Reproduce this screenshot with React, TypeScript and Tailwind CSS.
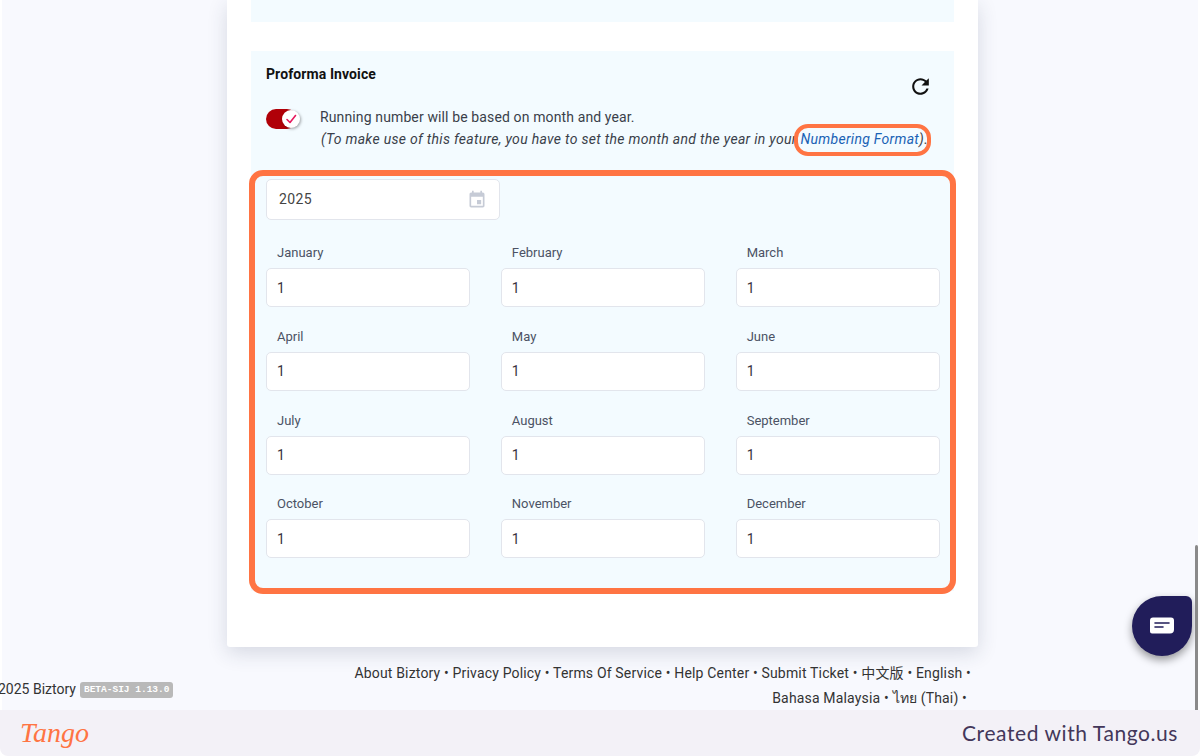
const months = [
  "January",
  "February",
  "March",
  "April",
  "May",
  "June",
  "July",
  "August",
  "September",
  "October",
  "November",
  "December",
];

function MonthField({ label }: { label: string }) {
  return (
    <div className="flex flex-col">
      <label className="mb-[5px] h-5 pl-[11px] text-[13px] leading-5 text-[#4b5264]">{label}</label>
      <input
        readOnly
        value="1"
        className="h-[39px] w-full rounded-[5px] border border-[#e2e5ec] bg-white px-[10px] text-[14px] text-[#3b3340] outline-none"
      />
    </div>
  );
}

function Toggle() {
  return (
    <div className="relative mt-[2px] h-5 w-[34px] shrink-0">
      <div className="h-5 w-[31px] rounded-full bg-[#b00008]" />
      <div className="absolute right-0 top-[1px] flex h-[18px] w-[18px] items-center justify-center rounded-full bg-white shadow-[1px_1px_3px_rgba(0,0,0,0.35)]">
        <svg width="12" height="12" viewBox="0 0 12 12" fill="none">
          <path d="M2 6.500 L5 9.500 L10.500 2.500" stroke="#e6175c" strokeWidth="1.6" strokeLinecap="round" strokeLinejoin="round" />
        </svg>
      </div>
    </div>
  );
}

export default function App() {
  return (
    <div className="relative flex h-[756px] w-[1200px] flex-col overflow-hidden bg-white font-['Roboto','Noto_Sans_CJK_SC','Noto_Sans',sans-serif]">
      <main className="relative mx-[2px] flex h-[710px] flex-col bg-[#f8f9fe]">
        {/* Card */}
        <div className="ml-[225px] h-[647px] w-[751px] shrink-0 rounded-b-[3px] bg-white px-6 shadow-[0_6px_20px_rgba(40,50,80,0.16)]">
          <div className="h-[22px] bg-[#f3fbff]" />

          {/* Proforma Invoice */}
          <section className="relative mt-[29px] h-[540px] bg-[#f3fbff] pl-[15px] pr-[14px] pt-[13px]">
            <div className="flex items-start justify-between">
              <h3 className="text-[14px] font-bold leading-5 tracking-[0.1px] text-[#111]">Proforma Invoice</h3>
              <svg className="mr-[7px] mt-[10px]" width="25" height="25" viewBox="0 0 24 24" fill="#111">
                <path d="M17.65 6.35C16.2 4.9 14.21 4 12 4c-4.42 0-7.99 3.58-7.99 8s3.57 8 7.99 8c3.73 0 6.84-2.55 7.73-6h-2.08c-.82 2.33-3.04 4-5.65 4-3.31 0-6-2.69-6-6s2.69-6 6-6c1.66 0 3.14.69 4.22 1.78L13 11h7V4l-2.35 2.35z" />
              </svg>
            </div>

            <div className="mt-[8px] flex gap-5">
              <Toggle />
              <div className="text-[14px] leading-[21.5px] text-[#3a3f4a]">
                <p className="tracking-[0.125px]">Running number will be based on month and year.</p>
                <p className="whitespace-nowrap pl-px italic tracking-[0.3px]">
                  (To make use of this feature, you have to set the month and the year in your{" "}
                  <span className="relative">
                    <a className="text-[#1a62b5]">Numbering Format</a>).
                    <span className="absolute -bottom-[9px] -left-[6px] -right-[3px] -top-[7px] rounded-[14px] border-4 border-[#ff7443]" />
                  </span>
                </p>
              </div>
            </div>

            <div className="mt-[29px] flex h-[41px] w-[234px] items-center justify-between rounded-[5px] border border-[#e2e5ec] bg-white pl-3 pr-[12px] text-[14px] tracking-[0.4px] text-[#444]">
              <span>2025</span>
              <svg width="20" height="20" viewBox="0 0 24 24" fill="#c6cbd6">
                <path d="M17 12h-5v5h5v-5zM16 1v2H8V1H6v2H5c-1.11 0-1.99.9-1.99 2L3 19c0 1.1.89 2 2 2h14c1.1 0 2-.9 2-2V5c0-1.1-.9-2-2-2h-1V1h-2zm3 18H5V8h14v11z" />
              </svg>
            </div>

            <div className="mt-[23px] grid grid-cols-3 gap-x-[30.5px] gap-y-[19.75px]">
              {months.map((m) => (
                <MonthField key={m} label={m} />
              ))}
            </div>

            {/* Tango highlight */}
            <div className="absolute -bottom-[3px] -left-[2px] -right-[2px] top-[119px] rounded-[14px] border-[6px] border-[#ff7443]" />
          </section>
        </div>

        {/* Footer */}
        <footer className="relative flex flex-1 items-start text-[14px] leading-[25px] text-[#333]">
          <div className="absolute left-[-15px] top-[30px] flex items-center gap-1">
            <span className="whitespace-nowrap">&copy;2025 Biztory</span>
            <span className="rounded-[3px] bg-[#b9b9b9] px-1 font-['Liberation_Mono',monospace] text-[9.5px] font-bold leading-4 text-white">
              BETA-SIJ 1.13.0
            </span>
          </div>
          <div className="ml-auto mr-[227px] pt-[14px] text-right tracking-[0.17px]">
            <p>About Biztory • Privacy Policy • Terms Of Service • Help Center • Submit Ticket • 中文版 • English •</p>
            <p className="pr-1">Bahasa Malaysia • ไทย (Thai) •</p>
          </div>
        </footer>

        {/* Chat bubble */}
        <button className="absolute left-[1130px] top-[596px] flex h-[60px] w-[60px] items-center justify-center rounded-[30px] rounded-tr-[6px] bg-[#211d5a] shadow-[0_4px_8px_rgba(0,0,0,0.4)]">
          <svg width="26" height="20" viewBox="0 0 26 20">
            <path d="M4 1.500h18a3 3 0 0 1 3 3v9a4 4 0 0 1-4 4H3a2 2 0 0 1-2-2V4.500a3 3 0 0 1 3-3z" fill="#fff" />
            <path d="M6 7h14M6 11h8" stroke="#211d5a" strokeWidth="1.6" strokeLinecap="round" />
          </svg>
        </button>

        {/* Scrollbar */}
        <div className="absolute bottom-0 left-[1193px] top-[545px] w-[3px] rounded-t-[2px] bg-[#8a8a8a]" />
      </main>

      {/* Tango bar */}
      <div className="flex h-[46px] items-center justify-between rounded-b-[8px] bg-[#f3f1f7] pl-5 pr-[22px]">
        <span className="font-['Liberation_Serif',serif] text-[28px] italic leading-none text-[#ff7443]">Tango</span>
        <span className="font-['Lato',sans-serif] text-[21px] tracking-[0.57px] text-[#43375a]">Created with Tango.us</span>
      </div>
    </div>
  );
}
